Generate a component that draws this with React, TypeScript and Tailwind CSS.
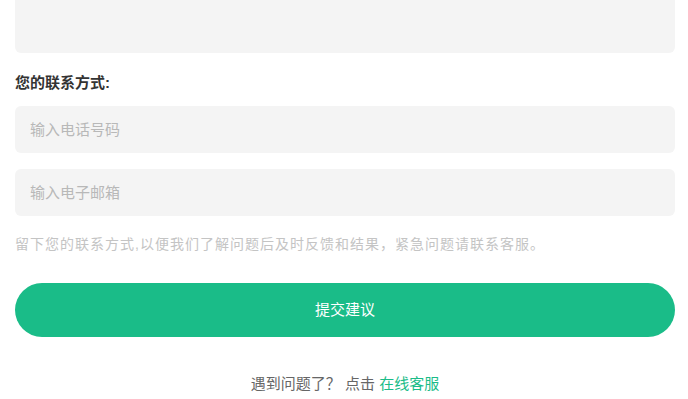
export default function App() {
    return <div className="w-[688px] h-[399px] bg-white overflow-hidden pl-[15px] pr-[13px] text-[15px]" style={{ fontFamily: '"Liberation Sans", "Noto Sans CJK SC", sans-serif' }}>
        <div className="h-[53px] bg-[#f4f4f4] rounded-b-md" />
        <div className="mt-[18px] h-[24px] leading-[24px] font-bold text-[#333]">您的联系方式:</div>
        <div className="mt-[11px] flex flex-col gap-[16px]">
            <FieldBox placeholder="输入电话号码" />
            <FieldBox placeholder="输入电子邮箱" />
        </div>
        <p className="mt-[16px] h-[24px] leading-[24px] text-[14px] tracking-[1px] text-[#c4c4c4] whitespace-nowrap">留下您的联系方式,以便我们了解问题后及时反馈和结果，紧急问题请联系客服。</p>
        <button className="mt-[27px] w-full h-[54px] rounded-full bg-[#1abc88] text-white text-[15px]">提交建议</button>
        <div className="mt-[35px] h-[24px] leading-[24px] text-center text-[#666]">
            遇到问题了？ 点击 <span className="text-[#1abc88]">在线客服</span>
        </div>
    </div>
}

function FieldBox({ placeholder }: { placeholder: string }) {
    return <input className="block w-full h-[47px] rounded-md bg-[#f4f4f4] px-[15px] outline-none placeholder:text-[#b8b8b8]" placeholder={placeholder} />
}
